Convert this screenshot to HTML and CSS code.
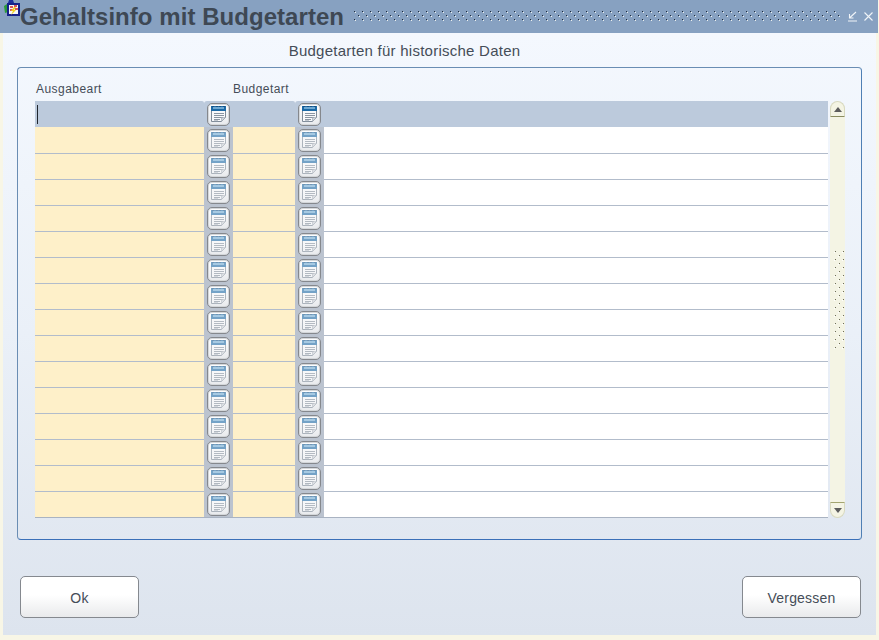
FILE: index.html
```html
<!DOCTYPE html>
<html lang="de">
<head>
<meta charset="utf-8">
<title>Gehaltsinfo mit Budgetarten</title>
<link rel="stylesheet" href="styles.css">
</head>
<body>
<svg class="defs" width="0" height="0" aria-hidden="true">
  <symbol id="note" viewBox="0 0 21 21">
    <path d="M3.500 3.500h14v10l-4 4h-10z" fill="#f8f9fb" stroke="#7f8b98" stroke-width="1"/>
    <rect x="3" y="2" width="15" height="5" fill="#1c6aa6"/>
    <rect x="5" y="3" width="11" height="2" fill="#6fa9d2"/>
    <path d="M5 2v1M9 2v1M12 2v1M16 2v1" stroke="#10355c" stroke-width="1"/>
    <path d="M6 9.500h10M6 11.500h10M6 13.500h9M6 15.500h6M6 17h4" stroke="#8a95a1" stroke-width="1"/>
    <path d="M13.500 17.500v-4h4z" fill="#cfd4da" stroke="#9aa3ad" stroke-width=".6"/>
  </symbol>
  <pattern id="dots" width="8" height="8" patternUnits="userSpaceOnUse">
    <rect x="0" y="0" width="1" height="1" fill="#1f2b3a"/><rect x="1" y="1" width="1" height="1" fill="#eef2f0"/>
    <rect x="4" y="4" width="1" height="1" fill="#1f2b3a"/><rect x="5" y="5" width="1" height="1" fill="#eef2f0"/>
  </pattern>
  <pattern id="griprow" width="8" height="8" patternUnits="userSpaceOnUse">
    <rect x="1" y="1" width="1" height="1" fill="#6d6d58"/><rect x="0" y="2" width="1" height="1" fill="#fff"/>
    <rect x="5" y="5" width="1" height="1" fill="#6d6d58"/><rect x="4" y="6" width="1" height="1" fill="#fff"/>
  </pattern>
</svg>
<div class="window">
  <header class="titlebar">
    <svg class="appicon" width="17" height="18" viewBox="0 0 17 18">
      <path d="M6 0h4l1 3H5z" fill="#1a2f9e"/>
      <path d="M1 6l3-2 1 8-3 1z" fill="#2a9a3a"/>
      <rect x="4" y="3" width="13" height="13" fill="#17228a"/>
      <rect x="6" y="5" width="9" height="9" fill="#f7f7f7"/>
      <path d="M7 7h3M11 6h3M7 10h3M12 9h3" stroke="#d4262a" stroke-width="1.300"/>
      <path d="M11 7l-3 4h2l-2 4 5-5h-2l2-3z" fill="#f2d21b"/>
    </svg>
    <h1 class="title">Gehaltsinfo mit Budgetarten</h1>
    <svg class="grip" height="11"><rect width="100%" height="11" fill="url(#dots)"/></svg>
    <svg class="winbtn" width="11" height="11" viewBox="0 0 11 11"><path d="M9 1L3 6.500M2.500 3v4h4M1 10h9" fill="none" stroke="#f0f4f8" stroke-width="1.100"/></svg>
    <svg class="winbtn" width="11" height="11" viewBox="0 0 11 11"><path d="M1.500 1.500l8 8M9.500 1.500l-8 8" fill="none" stroke="#f0f4f8" stroke-width="1.100"/></svg>
  </header>
  <main class="client">
    <h2 class="subtitle">Budgetarten für historische Daten</h2>
    <section class="panel">
      <div class="cols">
        <span class="label">Ausgabeart</span>
        <span class="label">Budgetart</span>
      </div>
      <div class="grid-wrap">
        <div class="table">
          <div class="row selected"><div class="field"><span class="caret"></span></div><div class="lov"><button class="lovbtn"><svg width="21" height="21"><use href="#note"/></svg></button></div><div class="field"></div><div class="lov"><button class="lovbtn"><svg width="21" height="21"><use href="#note"/></svg></button></div><div class="rest"></div></div>
          <div class="row"><div class="field"></div><div class="lov"><button class="lovbtn"><svg width="21" height="21"><use href="#note"/></svg></button></div><div class="field"></div><div class="lov"><button class="lovbtn"><svg width="21" height="21"><use href="#note"/></svg></button></div><div class="rest"></div></div>
          <div class="row"><div class="field"></div><div class="lov"><button class="lovbtn"><svg width="21" height="21"><use href="#note"/></svg></button></div><div class="field"></div><div class="lov"><button class="lovbtn"><svg width="21" height="21"><use href="#note"/></svg></button></div><div class="rest"></div></div>
          <div class="row"><div class="field"></div><div class="lov"><button class="lovbtn"><svg width="21" height="21"><use href="#note"/></svg></button></div><div class="field"></div><div class="lov"><button class="lovbtn"><svg width="21" height="21"><use href="#note"/></svg></button></div><div class="rest"></div></div>
          <div class="row"><div class="field"></div><div class="lov"><button class="lovbtn"><svg width="21" height="21"><use href="#note"/></svg></button></div><div class="field"></div><div class="lov"><button class="lovbtn"><svg width="21" height="21"><use href="#note"/></svg></button></div><div class="rest"></div></div>
          <div class="row"><div class="field"></div><div class="lov"><button class="lovbtn"><svg width="21" height="21"><use href="#note"/></svg></button></div><div class="field"></div><div class="lov"><button class="lovbtn"><svg width="21" height="21"><use href="#note"/></svg></button></div><div class="rest"></div></div>
          <div class="row"><div class="field"></div><div class="lov"><button class="lovbtn"><svg width="21" height="21"><use href="#note"/></svg></button></div><div class="field"></div><div class="lov"><button class="lovbtn"><svg width="21" height="21"><use href="#note"/></svg></button></div><div class="rest"></div></div>
          <div class="row"><div class="field"></div><div class="lov"><button class="lovbtn"><svg width="21" height="21"><use href="#note"/></svg></button></div><div class="field"></div><div class="lov"><button class="lovbtn"><svg width="21" height="21"><use href="#note"/></svg></button></div><div class="rest"></div></div>
          <div class="row"><div class="field"></div><div class="lov"><button class="lovbtn"><svg width="21" height="21"><use href="#note"/></svg></button></div><div class="field"></div><div class="lov"><button class="lovbtn"><svg width="21" height="21"><use href="#note"/></svg></button></div><div class="rest"></div></div>
          <div class="row"><div class="field"></div><div class="lov"><button class="lovbtn"><svg width="21" height="21"><use href="#note"/></svg></button></div><div class="field"></div><div class="lov"><button class="lovbtn"><svg width="21" height="21"><use href="#note"/></svg></button></div><div class="rest"></div></div>
          <div class="row"><div class="field"></div><div class="lov"><button class="lovbtn"><svg width="21" height="21"><use href="#note"/></svg></button></div><div class="field"></div><div class="lov"><button class="lovbtn"><svg width="21" height="21"><use href="#note"/></svg></button></div><div class="rest"></div></div>
          <div class="row"><div class="field"></div><div class="lov"><button class="lovbtn"><svg width="21" height="21"><use href="#note"/></svg></button></div><div class="field"></div><div class="lov"><button class="lovbtn"><svg width="21" height="21"><use href="#note"/></svg></button></div><div class="rest"></div></div>
          <div class="row"><div class="field"></div><div class="lov"><button class="lovbtn"><svg width="21" height="21"><use href="#note"/></svg></button></div><div class="field"></div><div class="lov"><button class="lovbtn"><svg width="21" height="21"><use href="#note"/></svg></button></div><div class="rest"></div></div>
          <div class="row"><div class="field"></div><div class="lov"><button class="lovbtn"><svg width="21" height="21"><use href="#note"/></svg></button></div><div class="field"></div><div class="lov"><button class="lovbtn"><svg width="21" height="21"><use href="#note"/></svg></button></div><div class="rest"></div></div>
          <div class="row"><div class="field"></div><div class="lov"><button class="lovbtn"><svg width="21" height="21"><use href="#note"/></svg></button></div><div class="field"></div><div class="lov"><button class="lovbtn"><svg width="21" height="21"><use href="#note"/></svg></button></div><div class="rest"></div></div>
          <div class="row"><div class="field"></div><div class="lov"><button class="lovbtn"><svg width="21" height="21"><use href="#note"/></svg></button></div><div class="field"></div><div class="lov"><button class="lovbtn"><svg width="21" height="21"><use href="#note"/></svg></button></div><div class="rest"></div></div>
        </div>
        <div class="scrollbar">
          <div class="sb-btn sb-up"><span class="arrow-up"></span></div>
          <div class="sb-track"><svg class="sb-grip" width="10" height="100"><rect width="10" height="100" fill="url(#griprow)"/></svg></div>
          <div class="sb-btn sb-down"><span class="arrow-down"></span></div>
        </div>
      </div>
    </section>
    <footer class="actions">
      <button class="action">Ok</button>
      <button class="action">Vergessen</button>
    </footer>
  </main>
</div>
</body>
</html>
```
FILE: styles.css
```css
* { box-sizing: border-box; }
html, body { margin: 0; padding: 0; }
body {
  width: 879px;
  height: 640px;
  overflow: hidden;
  background: #f8f6e6;
  font-family: "Liberation Sans", Arial, sans-serif;
  color: #454d58;
}
.defs { display: block; height: 0; }
.window { width: 878px; height: 640px; display: flex; flex-direction: column; }
.titlebar {
  height: 33px;
  flex: none;
  background: #87a1c1;
  display: flex;
  align-items: center;
  padding: 0 4px 0 3px;
}
.appicon { flex: none; margin-bottom: 15px; }
.title {
  margin: 0;
  flex: none;
  font-size: 24px;
  font-weight: bold;
  line-height: 33px;
  letter-spacing: 0.05px;
  color: #3e4854;
  white-space: nowrap;
}
.grip { flex: 1; margin: 0 2px 0 10px; min-width: 0; }
.winbtn { flex: none; margin-left: 5px; }
.client {
  flex: 1;
  margin: 0 2px 5px 3px;
  padding: 0 14px 0 14px;
  background: linear-gradient(#f4f8fe 0, #eaf0f8 300px, #dde4ee 100%);
  display: flex;
  flex-direction: column;
}
.subtitle {
  margin: 10px 0 0 0;
  padding-right: 70px;
  height: 24px;
  font-size: 15px;
  font-weight: normal;
  line-height: 16px;
  text-align: center;
  letter-spacing: 0.25px;
  color: #454d58;
}
.panel {
  height: 473px;
  border: 1px solid #6a8db3;
  border-right-color: #4f7fb4;
  border-bottom-color: #3a70b8;
  border-radius: 4px;
  padding: 14px 16px 0 17px;
}
.cols {
  display: grid;
  grid-template-columns: 197px auto;
  justify-content: start;
  height: 19px;
}
.label { font-size: 12px; line-height: 14px; letter-spacing: 0.45px; padding-left: 1px; color: #454d58; }
.grid-wrap { display: flex; gap: 2px; }
.table { width: 793px; border-bottom: 1px solid #a9b3c2; }
.row {
  display: grid;
  grid-template-columns: 169px 29px 62px 29px 1fr;
  height: 26px;
}
.row + .row .field, .row + .row .rest { border-top: 1px solid #b2bccb; }
.row:nth-child(2) .field, .row:nth-child(2) .rest { border-top: 0; }
.field { background: #fef0c9; }
.rest { background: #fff; }
.lov { background: #bbc3cf; padding-top: 2px; padding-left: 3px; }
.lovbtn {
  display: block;
  width: 23px;
  height: 23px;
  padding: 0;
  border: 1px solid #85888d;
  border-radius: 5px;
  background: linear-gradient(#ffffff, #e8eaed);
  box-shadow: inset 0 0 0 1px #d4d7da;
}
.lovbtn svg { display: block; }
.row:not(.selected) .lovbtn svg { opacity: .6; }
.selected .field, .selected .rest { background: #bccadc; }
.selected .lov { background: #bccadc; border-top-left-radius: 3px; }
.selected .field { border-top-right-radius: 2px; }
.caret { display: block; width: 1px; height: 19px; margin: 4px 0 0 2px; background: #20262e; }
.scrollbar { width: 15px; height: 417px; display: flex; flex-direction: column; }
.sb-btn {
  height: 16px;
  flex: none;
  background: #f4f4e4;
  border: 1px solid #d8d9bf;
  display: flex;
  align-items: center;
  justify-content: center;
}
.sb-up { border-radius: 8px 8px 0 0; border-bottom: 1px solid #8a8c60; }
.sb-down { border-radius: 0 0 8px 8px; border-top: 1px solid #a3a570; }
.arrow-up { border: 4px solid transparent; border-top: 0; border-bottom: 5px solid #5c5c5c; width: 0; height: 0; }
.arrow-down { border: 4px solid transparent; border-bottom: 0; border-top: 5px solid #5c5c5c; width: 0; height: 0; }
.sb-track { flex: 1; background: #f4f4e4; padding-top: 133px; }
.sb-grip { display: block; margin-left: 4px; }
.actions {
  display: flex;
  justify-content: space-between;
  margin-top: 36px;
  padding: 0 1px 0 3px;
}
.action {
  width: 119px;
  height: 42px;
  padding: 2px 0 0;
  border: 1px solid #85898f;
  border-radius: 5px;
  background: linear-gradient(#ffffff 0, #ffffff 45%, #e9eaec 100%);
  font-family: "Liberation Sans", Arial, sans-serif;
  font-size: 14px;
  letter-spacing: 0.2px;
  color: #454d58;
}
```
